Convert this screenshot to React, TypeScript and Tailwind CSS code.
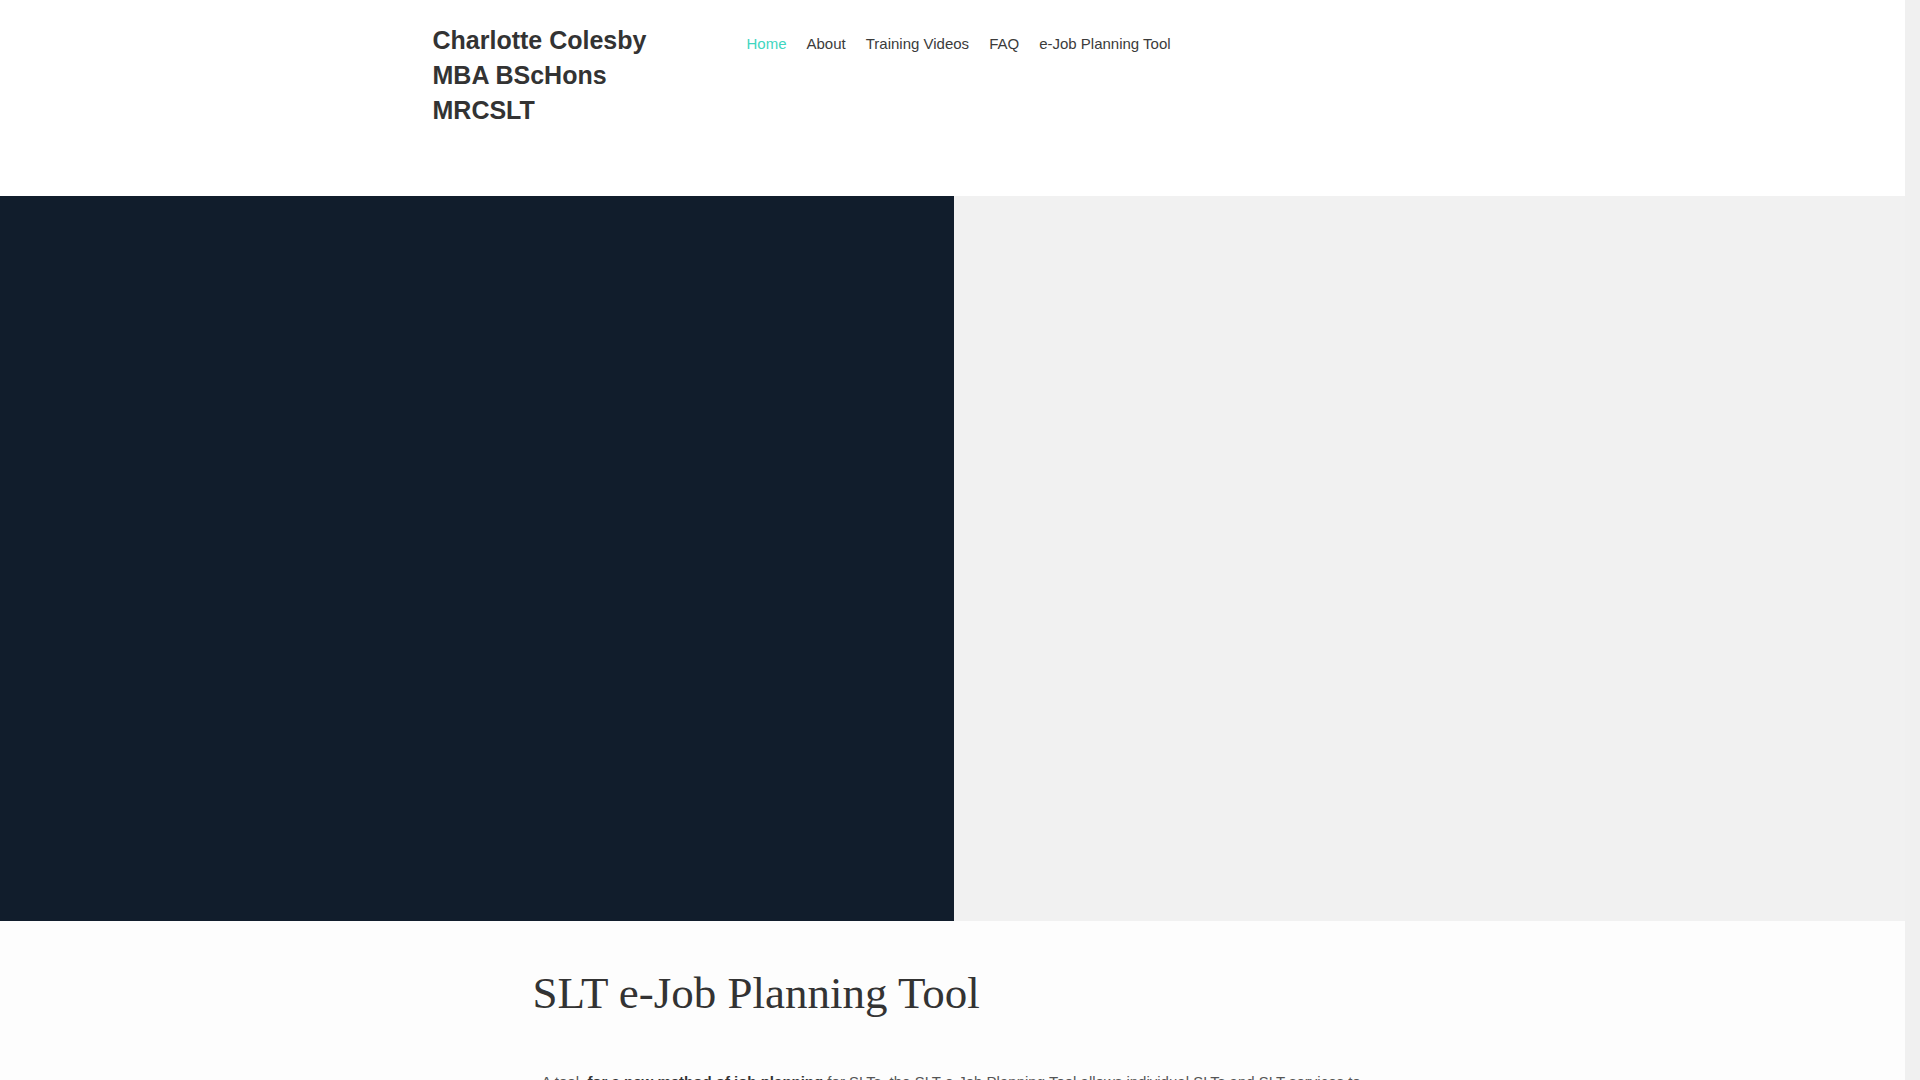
const navItems = ["Home", "About", "Training Videos", "FAQ", "e-Job Planning Tool"];

function Header() {
  return (
    <header className="h-[196px] bg-white">
      <div className="mx-auto flex w-[1040px] pt-[23px]">
        <h1 className="w-[240px] flex-none text-[25px] font-bold leading-[35px] text-[#333333]">
          Charlotte Colesby MBA BScHons MRCSLT
        </h1>
        <nav className="ml-[64px] flex pt-[11px]">
          {navItems.map((item, i) => (
            <a
              key={item}
              href="#"
              className={`px-[10px] text-[15px] leading-[20px] ${
                i === 0 ? "text-[#3fd6bf]" : "text-[#3b3b3b]"
              }`}
            >
              {item}
            </a>
          ))}
        </nav>
      </div>
    </header>
  );
}

function Hero() {
  return (
    <section className="flex h-[725px]">
      <div className="w-[954px] flex-none bg-[#111d2c]" />
      <div className="flex-1 bg-[#f1f1f1]" />
    </section>
  );
}

export default function App() {
  return (
    <div className="flex min-h-screen bg-[#f0f0f0] font-['Liberation_Sans',Arial,sans-serif]">
      <div className="min-h-[4800px] w-[1905px] flex-none bg-[#fdfdfd]">
        <Header />
        <Hero />
        <main className="mx-auto w-[840px] pt-[45px]">
          {/* Intro */}
          <h2 className="font-['Liberation_Serif','Times_New_Roman',serif] text-[45px] leading-[1.2] text-[#333333]">
            SLT e-Job Planning Tool
          </h2>
          <p className="mt-[51px] pl-[9px] text-[15px] leading-[22px] text-[#555555]">
            A tool, <b className="text-[#333333]">for a new method of job planning</b> for SLTs,
            the SLT e-Job Planning Tool allows individual SLTs and SLT services to record and
            review how their working time is spent, and to plan activity across the team.
          </p>
          <p className="mt-6 pl-[9px] text-[15px] leading-[22px] text-[#555555]">
            The tool can be used to support conversations about workload, caseload and service
            development, and to build a clear picture of clinical and non-clinical activity.
          </p>
        </main>
      </div>
    </div>
  );
}
